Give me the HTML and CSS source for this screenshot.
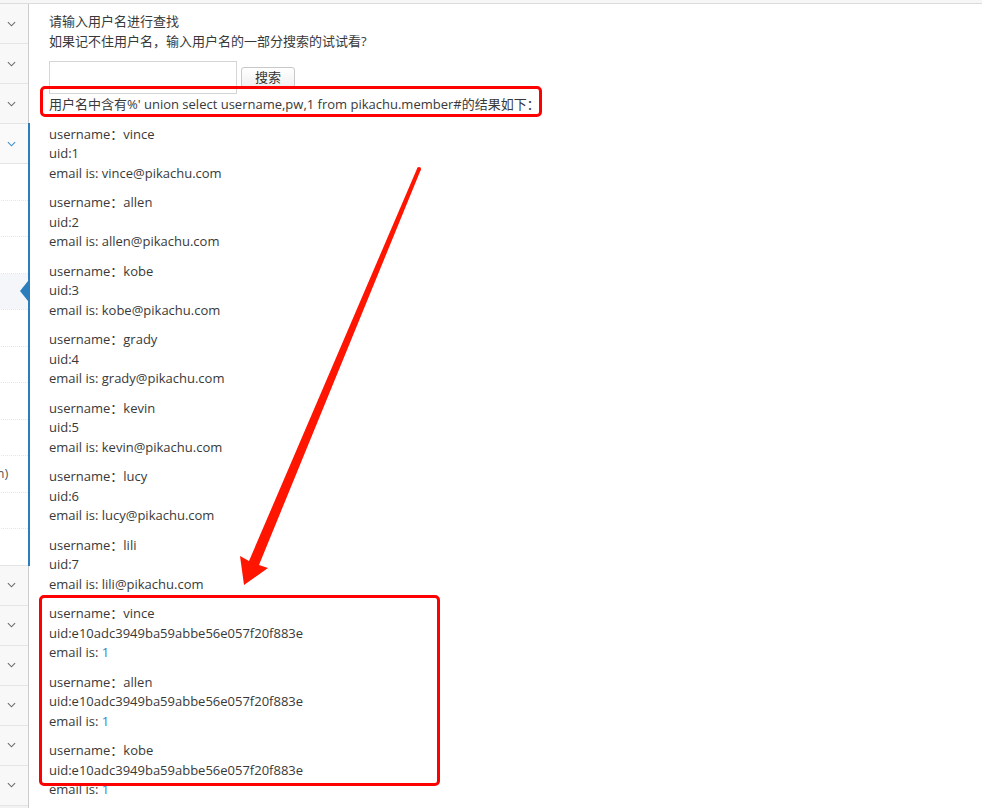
FILE: index.html
```html
<!DOCTYPE html>
<html lang="zh-CN">
<head>
<meta charset="utf-8">
<title>搜索型注入</title>
<link rel="stylesheet" href="styles.css">
</head>
<body>
<div class="page">
  <div class="topbar"></div>
  <div class="layout">
    <aside class="sidebar">
      <ul class="nav">
        <li class="nav-item"><a class="nav-link"><span class="label">暴力破解</span><svg class="chev" viewBox="0 0 10 6"><polyline points="1,1 5,5 9,1"/></svg></a></li>
        <li class="nav-item"><a class="nav-link"><span class="label">Cross-Site Scripting</span><svg class="chev" viewBox="0 0 10 6"><polyline points="1,1 5,5 9,1"/></svg></a></li>
        <li class="nav-item"><a class="nav-link"><span class="label">CSRF</span><svg class="chev" viewBox="0 0 10 6"><polyline points="1,1 5,5 9,1"/></svg></a></li>
        <li class="nav-item open">
          <a class="nav-link"><span class="label">SQL-Inject</span><svg class="chev" viewBox="0 0 10 6"><polyline points="1,1 5,5 9,1"/></svg></a>
          <ul class="submenu">
            <li class="sub-item"><a class="sub-link">概述</a></li>
            <li class="sub-item"><a class="sub-link">数字型注入(post)</a></li>
            <li class="sub-item"><a class="sub-link">字符型注入(get)</a></li>
            <li class="sub-item active"><a class="sub-link">搜索型注入</a></li>
            <li class="sub-item"><a class="sub-link">xx型注入</a></li>
            <li class="sub-item"><a class="sub-link">"insert/update"注入</a></li>
            <li class="sub-item"><a class="sub-link">"delete"注入</a></li>
            <li class="sub-item"><a class="sub-link">"http header"注入</a></li>
            <li class="sub-item"><a class="sub-link">盲注(base on boolian)</a></li>
            <li class="sub-item"><a class="sub-link">盲注(base on time)</a></li>
            <li class="sub-item"><a class="sub-link">宽字节注入</a></li>
          </ul>
        </li>
        <li class="nav-item"><a class="nav-link"><span class="label">RCE</span><svg class="chev" viewBox="0 0 10 6"><polyline points="1,1 5,5 9,1"/></svg></a></li>
        <li class="nav-item"><a class="nav-link"><span class="label">File Inclusion</span><svg class="chev" viewBox="0 0 10 6"><polyline points="1,1 5,5 9,1"/></svg></a></li>
        <li class="nav-item"><a class="nav-link"><span class="label">Unsafe Filedownload</span><svg class="chev" viewBox="0 0 10 6"><polyline points="1,1 5,5 9,1"/></svg></a></li>
        <li class="nav-item"><a class="nav-link"><span class="label">Unsafe Fileupload</span><svg class="chev" viewBox="0 0 10 6"><polyline points="1,1 5,5 9,1"/></svg></a></li>
        <li class="nav-item"><a class="nav-link"><span class="label">Over Permission</span><svg class="chev" viewBox="0 0 10 6"><polyline points="1,1 5,5 9,1"/></svg></a></li>
        <li class="nav-item"><a class="nav-link"><span class="label">../../</span><svg class="chev" viewBox="0 0 10 6"><polyline points="1,1 5,5 9,1"/></svg></a></li>
      </ul>
    </aside>
    <main class="main">
      <p class="intro">请输入用户名进行查找<br>如果记不住用户名，输入用户名的一部分搜索的试试看?</p>
      <form class="search">
        <input class="search-input" type="text" name="name">
        <button class="search-btn" type="button">搜索</button>
      </form>
      <p class="notice">用户名中含有%' union select username,pw,1 from pikachu.member#的结果如下：</p>
      <p class="rec">username：vince<br>uid:1<br>email is: vince@pikachu.com</p>
      <p class="rec">username：allen<br>uid:2<br>email is: allen@pikachu.com</p>
      <p class="rec">username：kobe<br>uid:3<br>email is: kobe@pikachu.com</p>
      <p class="rec">username：grady<br>uid:4<br>email is: grady@pikachu.com</p>
      <p class="rec">username：kevin<br>uid:5<br>email is: kevin@pikachu.com</p>
      <p class="rec">username：lucy<br>uid:6<br>email is: lucy@pikachu.com</p>
      <p class="rec">username：lili<br>uid:7<br>email is: lili@pikachu.com</p>
      <p class="rec">username：vince<br>uid:e10adc3949ba59abbe56e057f20f883e<br>email is: <span class="num">1</span></p>
      <p class="rec">username：allen<br>uid:e10adc3949ba59abbe56e057f20f883e<br>email is: <span class="num">1</span></p>
      <p class="rec">username：kobe<br>uid:e10adc3949ba59abbe56e057f20f883e<br>email is: <span class="num">1</span></p>
      <p class="rec">username：grady<br>uid:e10adc3949ba59abbe56e057f20f883e<br>email is: <span class="num">1</span></p>
    </main>
  </div>
  <div class="mark mark-query"></div>
  <div class="mark mark-result"></div>
  <svg class="arrow" viewBox="0 0 982 808" width="982" height="808">
    <polygon points="417.2,168.2 249,561 240,556 244,585 268,568 259,565 420.8,169.8" fill="#ff1500"/>
    <circle cx="419" cy="169" r="2.1" fill="#ff1500"/>
  </svg>
</div>
</body>
</html>
```

FILE: styles.css
```css
html, body {
  margin: 0;
  padding: 0;
  height: 100%;
  overflow: hidden;
  background: #ffffff;
}

body {
  font-family: "Open Sans", "Noto Sans CJK SC", sans-serif;
  font-size: 13px;
  line-height: 1.5;
  color: #393939;
}

.page {
  position: relative;
  width: 982px;
  height: 808px;
}

.topbar {
  height: 3px;
  background: #f6f6f6;
  border-bottom: 1px solid #dcdcdc;
}

.layout {
  display: flex;
  align-items: stretch;
}

/* sidebar */
.sidebar {
  flex: 0 0 28px;
  width: 28px;
  border-right: 1px solid #cccccc;
  background: #f2f2f2;
  min-height: 804px;
}

.nav {
  list-style: none;
  margin: 0 0 0 -162px;
  padding: 0;
  width: 190px;
}

.nav-item {
  position: relative;
  border-bottom: 1px solid #e5e5e5;
  background: #f8f8f8;
}

.nav-link {
  display: flex;
  align-items: center;
  justify-content: space-between;
  height: 39px;
  padding: 0 12px 0 10px;
  color: #585858;
  white-space: nowrap;
}

.chev {
  width: 9px;
  height: 6px;
  fill: none;
  stroke: #6a6a6a;
  stroke-width: 1.2;
}

.nav-item.open {
  background: #ffffff;
}

.nav-item.open > .nav-link {
  background: #fafafa;
}

.nav-item.open .chev {
  stroke: #3d8ccc;
}

.nav-item.open::after {
  content: "";
  position: absolute;
  right: -2px;
  top: -1px;
  bottom: -1px;
  width: 2px;
  background: #2b7dbc;
  z-index: 2;
}

.submenu {
  list-style: none;
  margin: 0;
  padding: 0;
  border-top: 1px solid #e5e5e5;
  background: #ffffff;
}

.sub-item {
  position: relative;
  border-top: 1px dotted #e4e4e4;
}

.sub-item:first-child {
  border-top: none;
}

.sub-link {
  display: flex;
  align-items: center;
  height: 35.5px;
  padding-left: 40px;
  color: #585858;
  white-space: nowrap;
}

.sub-item.active .sub-link {
  background: #f4f6f9;
}

.sub-item.active::after {
  content: "";
  position: absolute;
  right: 0;
  top: 50%;
  margin-top: -10px;
  border-style: solid;
  border-width: 10px 8px 10px 0;
  border-color: transparent #2b7dbc transparent transparent;
}

/* main */
.main {
  flex: 1;
  padding: 8px 20px 24px 20px;
}

.main p {
  margin: 0 0 10px 0;
}

.search {
  display: flex;
  align-items: flex-start;
  gap: 4px;
  height: 34px;
  margin: 0;
}

.search-input {
  box-sizing: border-box;
  width: 188px;
  height: 33px;
  margin: 0;
  padding: 5px 4px 6px;
  border: 1px solid #d5d5d5;
  border-radius: 0;
  background: #ffffff;
  font: inherit;
}

.search-btn {
  box-sizing: border-box;
  height: 21px;
  margin-top: 6px;
  padding: 0 13px;
  border: 1px solid #c8c8c8;
  border-radius: 3px;
  background: linear-gradient(#ffffff, #f0f0f0);
  font-family: "Open Sans", "Noto Sans CJK SC", sans-serif;
  font-size: 13px;
  line-height: 19px;
  color: #333333;
}

.main .notice {
  margin-bottom: 10px;
}

.num {
  color: #3a80c4;
}

/* annotations */
.mark {
  position: absolute;
  box-sizing: border-box;
  border: 3px solid #fe0000;
  border-radius: 5px;
}

.mark-query {
  left: 40px;
  top: 86px;
  width: 502px;
  height: 31px;
}

.mark-result {
  left: 39px;
  top: 595px;
  width: 401px;
  height: 191px;
}

.arrow {
  position: absolute;
  left: 0;
  top: 0;
  pointer-events: none;
}
```
